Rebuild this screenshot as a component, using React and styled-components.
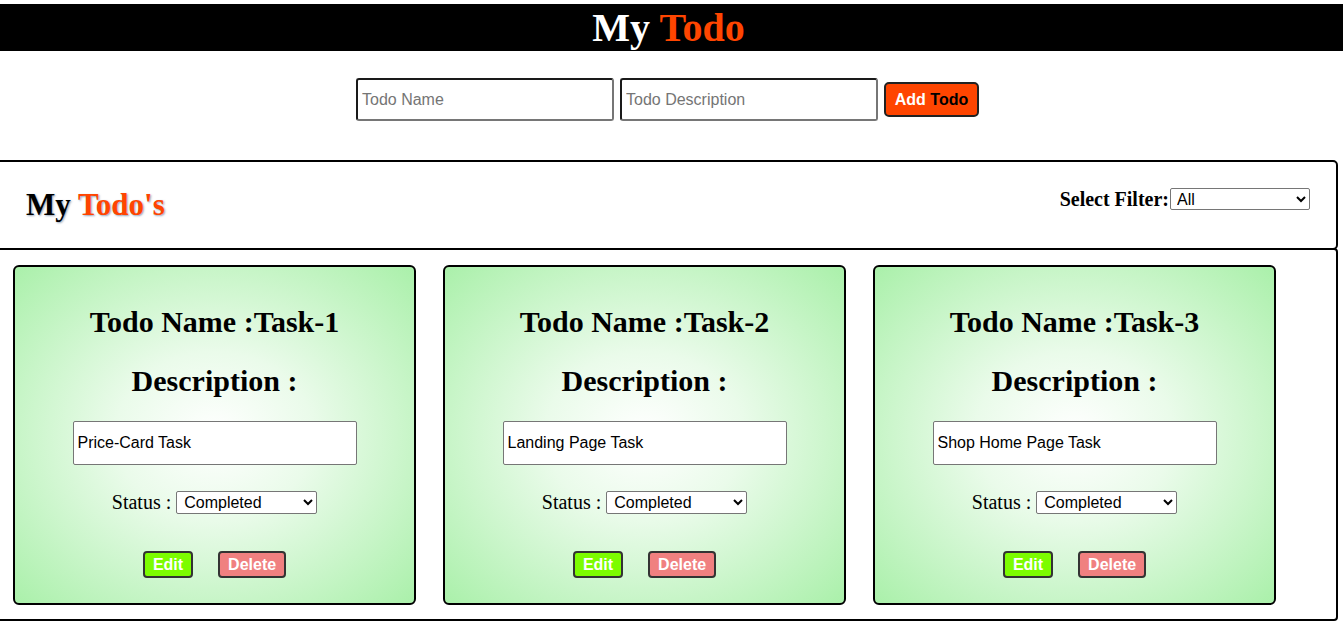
import { useState } from "react";
import styled, { createGlobalStyle } from "styled-components";

const GlobalStyle = createGlobalStyle`
  body {
    margin: 0;
    background: #fff;
    font-family: "Liberation Serif", "Times New Roman", serif;
    overflow-x: hidden;
  }
`;

const todos = [
  { id: 1, name: "Task-1", description: "Price-Card Task" },
  { id: 2, name: "Task-2", description: "Landing Page Task" },
  { id: 3, name: "Task-3", description: "Shop Home Page Task" },
];

function App() {
  const [filter, setFilter] = useState("all");

  return (
    <>
      <GlobalStyle />
      <Header>
        My <Orange>Todo</Orange>
      </Header>

      <AddForm onSubmit={(e) => e.preventDefault()}>
        <TopInput type="text" placeholder="Todo Name" />
        <TopInput type="text" placeholder="Todo Description" />
        <AddButton type="submit">
          Add <Dark>Todo</Dark>
        </AddButton>
      </AddForm>

      <TitleBar>
        <SectionTitle>
          My <Orange>Todo's</Orange>
        </SectionTitle>
        <Filter>
          <FilterLabel>Select Filter:</FilterLabel>
          <FilterSelect
            value={filter}
            onChange={(e) => setFilter(e.target.value)}
          >
            <option value="all">All</option>
            <option value="completed">Completed</option>
            <option value="notcompleted">Not Completed</option>
          </FilterSelect>
        </Filter>
      </TitleBar>

      <List>
        {todos.map((item) => (
          <Card key={item.id}>
            <CardHeading>Todo Name :{item.name}</CardHeading>
            <CardHeading $gap={24}>Description :</CardHeading>
            <DescInput type="text" defaultValue={item.description} />
            <StatusRow>
              Status :
              <StatusSelect defaultValue="completed">
                <option value="completed">Completed</option>
                <option value="notcompleted">Not Completed</option>
              </StatusSelect>
            </StatusRow>
            <Actions>
              <ActionButton $bg="#7cfc00">Edit</ActionButton>
              <ActionButton $bg="#f08080">Delete</ActionButton>
            </Actions>
          </Card>
        ))}
      </List>
    </>
  );
}

export default App;

const Header = styled.h1`
  margin: 4px 0 0;
  height: 47px;
  line-height: 47px;
  padding-right: 6px;
  background: #000;
  color: #fff;
  text-align: center;
  font-size: 40px;
  font-weight: 700;
`;

const Orange = styled.span`
  color: #ff4500;
`;

const Dark = styled.span`
  color: #000;
`;

const AddForm = styled.form`
  margin-top: 27px;
  display: flex;
  justify-content: center;
  align-items: center;
  gap: 6px;
  padding-right: 8px;
`;

const TopInput = styled.input`
  box-sizing: border-box;
  width: 258px;
  height: 43px;
  padding: 0 4px;
  border: 2px solid;
  border-color: #1a1a1a #767676 #767676 #1a1a1a;
  border-radius: 3px;
  font-family: "Liberation Sans", Arial, sans-serif;
  font-size: 16px;
  outline: none;
  &::placeholder {
    color: #757575;
  }
`;

const AddButton = styled.button`
  box-sizing: border-box;
  width: 95px;
  height: 35px;
  padding: 0;
  background: #ff4500;
  color: #fff;
  border: 2px solid #222;
  border-radius: 5px;
  font-family: "Liberation Sans", Arial, sans-serif;
  font-size: 16px;
  font-weight: 700;
  cursor: pointer;
`;

const TitleBar = styled.div`
  box-sizing: border-box;
  margin: 39px 5px 0 -3px;
  height: 90px;
  padding: 0 26px 0 27px;
  display: flex;
  justify-content: space-between;
  align-items: center;
  border: 2px solid #000;
  border-radius: 0 5px 5px 0;
`;

const SectionTitle = styled.h2`
  margin: 0;
  font-size: 31px;
  font-weight: 700;
  color: #000;
  text-shadow: 1px 1px 2px rgba(60, 90, 130, 0.55);
`;

const Filter = styled.div`
  display: flex;
  align-items: center;
  margin-bottom: 12px;
`;

const FilterLabel = styled.label`
  font-size: 20px;
  font-weight: 700;
  color: #000;
`;

const FilterSelect = styled.select`
  box-sizing: border-box;
  width: 140px;
  height: 22px;
  margin-left: 1px;
  padding-left: 2px;
  border: 1px solid #767676;
  border-radius: 2px;
  background: #fff;
  font-family: "Liberation Sans", Arial, sans-serif;
  font-size: 16px;
`;

const List = styled.div`
  box-sizing: border-box;
  margin: -2px 5px 0 -3px;
  padding: 15px 15px 14px 14px;
  display: flex;
  flex-wrap: wrap;
  gap: 27px;
  border: 2px solid #000;
  border-radius: 0 4px 4px 0;
`;

const Card = styled.div`
  box-sizing: border-box;
  width: 403px;
  height: 340px;
  padding: 38px 0 24px;
  display: flex;
  flex-direction: column;
  align-items: center;
  border: 2px solid #000;
  border-radius: 6px;
  background: radial-gradient(ellipse at center, #ffffff 0%, #eafbea 35%, #aaf0aa 100%);
`;

const CardHeading = styled.h2`
  margin: 0 0 ${(p) => p.$gap ?? 26}px;
  font-size: 30px;
  line-height: 33px;
  font-weight: 700;
  color: #000;
  text-align: center;
`;

const DescInput = styled.input`
  box-sizing: border-box;
  width: 284px;
  height: 44px;
  margin-bottom: 26px;
  padding: 0 4px;
  border: 1px solid #767676;
  border-radius: 2px;
  background: #fff;
  font-family: "Liberation Sans", Arial, sans-serif;
  font-size: 16px;
  color: #000;
  outline: none;
`;

const StatusRow = styled.div`
  display: flex;
  align-items: center;
  gap: 5px;
  height: 23px;
  margin-bottom: 37px;
  font-size: 20px;
  color: #000;
`;

const StatusSelect = styled.select`
  box-sizing: border-box;
  width: 141px;
  height: 23px;
  padding-left: 3px;
  border: 1px solid #767676;
  border-radius: 2px;
  background: #fff;
  font-family: "Liberation Sans", Arial, sans-serif;
  font-size: 16px;
`;

const Actions = styled.div`
  display: flex;
  gap: 25px;
`;

const ActionButton = styled.button`
  box-sizing: border-box;
  height: 27px;
  padding: 0 8px;
  background: ${(p) => p.$bg};
  color: #fff;
  border: 2px solid #333;
  border-radius: 4px;
  font-family: "Liberation Sans", Arial, sans-serif;
  font-size: 16px;
  font-weight: 700;
  cursor: pointer;
`;
